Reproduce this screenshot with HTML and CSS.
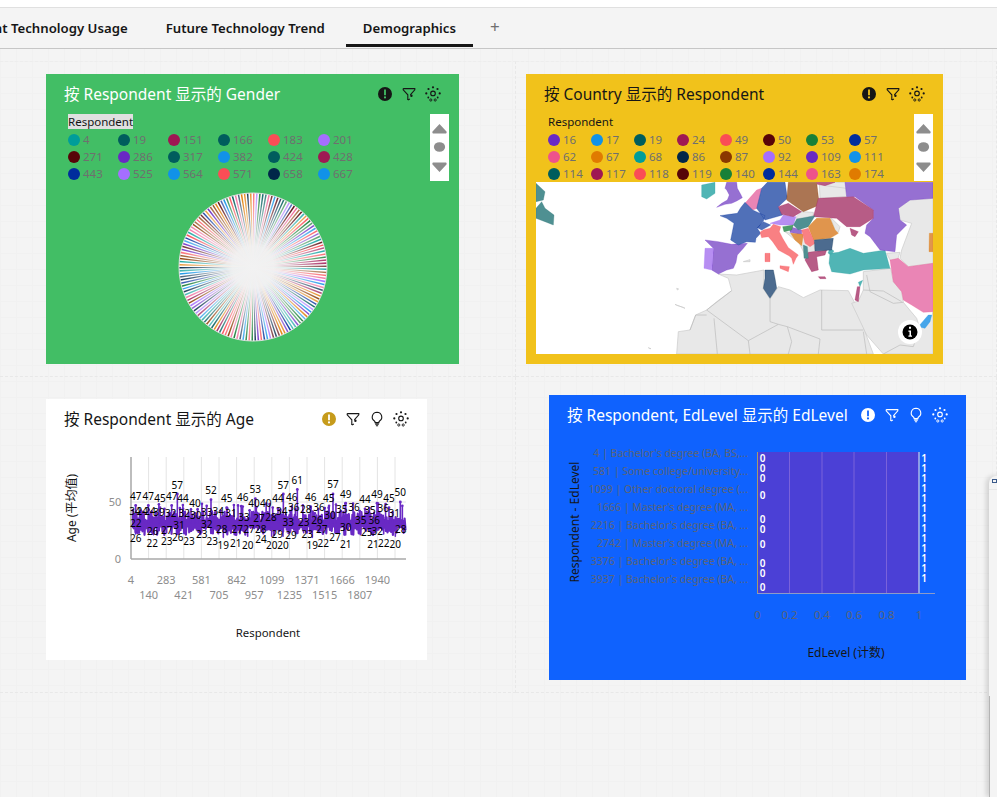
FILE: index.html
```html
<!DOCTYPE html>
<html lang="zh">
<head>
<meta charset="utf-8">
<title>Demographics</title>
<link rel="stylesheet" href="styles.css">
</head>
<body>
<svg class="defs" width="0" height="0" aria-hidden="true">
  <symbol id="i-notice" viewBox="0 0 16 16"><path fill-rule="evenodd" d="M8 1a7 7 0 1 0 0 14A7 7 0 0 0 8 1zM7.1 3.6h1.8v5.600H7.100zM8 10.300a1.100 1.100 0 1 1 0 2.200 1.100 1.100 0 0 1 0-2.200z"/></symbol>
  <symbol id="i-filter" viewBox="0 0 16 16"><path fill="none" stroke="currentColor" stroke-width="1.100" d="M2.200 2.600h11.600v1.300L9.300 8.800M6.800 14V8.800L2.200 3.900V2.600"/><path fill="none" stroke="currentColor" stroke-width="1.100" d="M6.800 14l2.100-1"/><circle cx="10.400" cy="9.700" r="1.200" fill="currentColor"/></symbol>
  <symbol id="i-bulb" viewBox="0 0 16 16"><path fill="none" stroke="currentColor" stroke-width="1.100" d="M8 1.200a4.800 4.800 0 0 0-2.600 8.800c.5.4.7 1 .7 1.600h3.800c0-.6.2-1.200.7-1.600A4.800 4.800 0 0 0 8 1.200zM6.200 13.100h3.600M6.900 14.700h2.200"/></symbol>
  <symbol id="i-smart" viewBox="0 0 16 16"><circle cx="8" cy="7.400" r="2.300" fill="none" stroke="currentColor" stroke-width="1.100"/><g fill="currentColor"><circle cx="8" cy="1.300" r="1.100"/><circle cx="3.500" cy="3" r="1.100"/><circle cx="12.500" cy="3" r="1.100"/><circle cx="1.300" cy="7.400" r="1.100"/><circle cx="14.700" cy="7.400" r="1.100"/><circle cx="3.300" cy="11.500" r=".9"/><circle cx="12.700" cy="11.500" r=".9"/></g><g fill="none" stroke="currentColor" stroke-width=".9"><circle cx="5.800" cy="14" r="1.100"/><circle cx="10.200" cy="14" r="1.100"/></g></symbol>
  <symbol id="i-scroll" viewBox="0 0 19 67"><g fill="#8d8d8d"><path d="M9.500 10l6.500 7a1.500 1.500 0 0 1 0 2.500H3a1.500 1.500 0 0 1 0-2.500z"/><ellipse cx="9.500" cy="33" rx="5.600" ry="4.800"/><path d="M9.500 58l6.500-7a1.500 1.500 0 0 0 0-2.500H3A1.500 1.500 0 0 0 3 51z"/></g></symbol>
</svg>

<div class="topline"></div>
<nav class="tabs">
  <a class="tab">Current Technology Usage</a>
  <a class="tab">Future Technology Trend</a>
  <a class="tab tab-active">Demographics</a>
  <span class="tab-add">+</span>
</nav>

<main class="canvas">
  <div class="cell">
    <section class="card card-gender">
      <header class="card-head">
        <h2 class="card-title">按 Respondent 显示的 Gender</h2>
        <div class="card-icons">
          <svg class="ico"><use href="#i-notice"/></svg>
          <svg class="ico"><use href="#i-filter"/></svg>
          <svg class="ico"><use href="#i-smart"/></svg>
        </div>
      </header>
      <div class="legend-panel">
        <div class="legend legend-wide">
          <div class="legend-title legend-title-hl">Respondent</div>
          <ul class="legend-grid cols-wide">
            <li><i class="dot c-teal"></i>4</li><li><i class="dot c-dteal"></i>19</li><li><i class="dot c-mag"></i>151</li><li><i class="dot c-dteal"></i>166</li><li><i class="dot c-red"></i>183</li><li><i class="dot c-lpur"></i>201</li>
            <li><i class="dot c-wine"></i>271</li><li><i class="dot c-pur"></i>286</li><li><i class="dot c-dteal"></i>317</li><li><i class="dot c-sky"></i>382</li><li><i class="dot c-dteal"></i>424</li><li><i class="dot c-mag"></i>428</li>
            <li><i class="dot c-navy"></i>443</li><li><i class="dot c-lpur"></i>525</li><li><i class="dot c-sky"></i>564</li><li><i class="dot c-red"></i>571</li><li><i class="dot c-ink"></i>658</li><li><i class="dot c-sky"></i>667</li>
          </ul>
        </div>
        <svg class="scroller"><use href="#i-scroll"/></svg>
      </div>
      <svg id="pie" class="pie" width="150" height="150" viewBox="-75 -75 150 150"></svg>
    </section>
  </div>

  <div class="cell">
    <section class="card card-country">
      <header class="card-head">
        <h2 class="card-title">按 Country 显示的 Respondent</h2>
        <div class="card-icons">
          <svg class="ico"><use href="#i-notice"/></svg>
          <svg class="ico"><use href="#i-filter"/></svg>
          <svg class="ico"><use href="#i-smart"/></svg>
        </div>
      </header>
      <div class="legend-panel">
        <div class="legend legend-narrow">
          <div class="legend-title">Respondent</div>
          <ul class="legend-grid cols-narrow">
            <li><i class="dot c-pur"></i>16</li><li><i class="dot c-sky"></i>17</li><li><i class="dot c-dteal"></i>19</li><li><i class="dot c-mag"></i>24</li><li><i class="dot c-red"></i>49</li><li><i class="dot c-wine"></i>50</li><li><i class="dot c-green"></i>53</li><li><i class="dot c-navy"></i>57</li>
            <li><i class="dot c-pink"></i>62</li><li><i class="dot c-orange"></i>67</li><li><i class="dot c-teal"></i>68</li><li><i class="dot c-ink"></i>86</li><li><i class="dot c-brown"></i>87</li><li><i class="dot c-lpur"></i>92</li><li><i class="dot c-pur"></i>109</li><li><i class="dot c-sky"></i>111</li>
            <li><i class="dot c-dteal"></i>114</li><li><i class="dot c-mag"></i>117</li><li><i class="dot c-red"></i>118</li><li><i class="dot c-wine"></i>119</li><li><i class="dot c-green"></i>140</li><li><i class="dot c-navy"></i>144</li><li><i class="dot c-pink"></i>163</li><li><i class="dot c-orange"></i>174</li>
          </ul>
        </div>
        <svg class="scroller"><use href="#i-scroll"/></svg>
      </div>
      <div class="map-wrap">
        <svg class="map" viewBox="18 21 1191 516" preserveAspectRatio="none">
          <g class="land">
            <path d="M440 537L445 470L480 465L497 420L530 405L560 380L605 347L595 310L565 297L620 300L702 285L700 340L720 372L745 335L780 345L820 368L870 345L955 347L975 385L1005 470L1030 537Z"/>
            <path d="M985 378L1000 345L1000 290L1082 280L1090 320L1115 350L1120 382L1160 430L1168 455L1205 425L1209 410V537H1060L1010 480L965 385Z"/>
            <path d="M1105 100L1140 75L1209 70V265L1135 275L1110 250L1115 225L1145 145L1110 135Z"/>
            <path d="M1070 235L1110 232L1100 262L1080 255Z"/>
            <path d="M868 25H945L950 65L870 70Z"/>
            <path d="M945 22L865 22L885 32L950 40Z"/>
            <path d="M800 125L815 110L850 112L850 122L820 132L800 132Z"/>
            <path d="M900 125L930 155L925 172L915 165Z"/>
            <path d="M765 170L850 195L855 230L830 250L808 205Z"/>
            <path d="M640 260l20-6v6zM440 340l6 2-4 3zM435 388l30 12-5-3-20-6zM355 518l8 3h-4z"/>
          </g>
          <g class="borders">
            <path d="M530 405L655 497L745 448L772 455L870 492M605 347L530 405M552 430L562 537M655 497L660 537M772 455L785 500L775 537M870 492L865 537M745 448L720 440L720 372M875 345L875 465M875 465H1000M1000 470L1010 537M1010 300L1020 350L1090 385L1120 382M1000 345L1060 348L1115 380M480 465L497 420H530"/>
            <path d="M1060 537L1110 510L1150 515L1168 460"/>
          </g>
          <g class="countries">
            <path class="m-sea" d="M18 25L45 50L40 75L18 80ZM18 100L35 80L45 100L72 120L70 150L45 140L18 130Z"/>
            <path class="m-tq" d="M515 30L555 22L555 55L530 72L515 65ZM900 235L925 232L960 220L1000 235L1065 225L1080 280L1000 285L960 297L905 290L897 265ZM900 220l12 8-10 12-8-6ZM985 322L998 316L990 335Z"/>
            <path class="m-pr" d="M590 22H620L622 40L632 58L637 68L620 78L605 85L585 88L560 97L575 85L592 75L598 60L590 45L585 40ZM525 195L565 200L605 208L652 205L640 220L622 240L618 262L610 280L590 285L565 297L545 285L550 220ZM945 22H1209V70L1140 75L1105 100L1110 135L1130 150L1100 180L1095 230L1050 225L1020 185L1005 175L1010 150L1030 130L1030 105L975 65L950 65ZM780 155L815 165L815 180L780 172Z"/>
            <path class="m-pk" d="M645 85L680 45L695 40L682 100L668 105ZM1080 255L1105 250L1135 275L1209 265V410L1180 412L1145 390L1120 375L1115 350L1090 320Z"/>
            <path class="m-bl" d="M712 22H765L772 70L745 95L758 120L705 135L680 100L695 40ZM570 122L598 118L622 115L632 98L645 82L668 105L705 122L700 138L682 160L692 175L678 190L676 202L650 200L625 210L602 195L607 170L612 145L590 130ZM682 158L700 140L722 150L695 165Z"/>
            <path class="m-lp" d="M720 145L750 135L760 120L798 125L790 150L750 150ZM525 220H550L545 285L522 280Z"/>
            <path class="m-br" d="M775 22H860L868 90L820 110L770 75Z"/>
            <path class="m-mv" d="M745 95L775 85L815 110L790 125L755 118ZM865 70L970 65L1030 105L1030 130L990 155L950 155L920 130L850 125ZM960 160L985 170L975 185L965 180ZM835 232L890 225L885 240L860 245L865 285L845 290L825 255ZM982 335L990 335L985 380L975 375ZM865 305H885L888 311H870ZM860 22H915L885 32L862 28Z"/>
            <path class="m-sea" d="M790 150L800 132L855 122L835 155L805 165ZM820 210L832 215L835 250L822 250Z"/>
            <path class="m-gr" d="M758 155L790 150L785 165L762 170Z"/>
            <path class="m-or" d="M835 155L860 130L900 130L915 165L925 175L900 190L850 195ZM782 175L820 178L815 212L795 195ZM1198 175H1209V230H1197Z"/>
            <path class="m-sl" d="M690 172L700 165L720 160L730 148L752 155L748 170L758 190L775 218L805 240L798 250L790 268L785 250L778 243L745 225L728 200L715 185L695 188ZM750 272L778 275L775 290L750 280ZM705 235H720V260H705ZM815 165L835 160L855 205L840 215L825 205Z"/>
            <path class="m-st" d="M853 195L910 190L905 225L855 228ZM705 285H730L735 310L740 340L720 370L700 340L705 310Z"/>
            <path class="m-bu" d="M1165 455L1195 420L1205 420L1200 440L1185 460Z"/>
          </g>
        </svg>
        <svg class="map-info" viewBox="0 0 24 24"><circle cx="12" cy="12" r="12" fill="#fff"/><circle cx="12" cy="12" r="7.500" fill="#000"/><path fill="#fff" d="M11 6.800h2v2h-2zM10.400 10.400h2.600v5h1v1.400h-3.600v-1.400h1.100V11.800h-1.100z"/></svg>
      </div>
    </section>
  </div>

  <div class="cell">
    <section class="card card-age">
      <header class="card-head">
        <h2 class="card-title">按 Respondent 显示的 Age</h2>
        <div class="card-icons">
          <svg class="ico ico-amber"><use href="#i-notice"/></svg>
          <svg class="ico"><use href="#i-filter"/></svg>
          <svg class="ico"><use href="#i-bulb"/></svg>
          <svg class="ico"><use href="#i-smart"/></svg>
        </div>
      </header>
      <svg id="age" class="chart" width="381" height="221" viewBox="46 439 381 221"></svg>
    </section>
  </div>

  <div class="cell">
    <section class="card card-edu">
      <header class="card-head">
        <h2 class="card-title">按 Respondent, EdLevel 显示的 EdLevel</h2>
        <div class="card-icons">
          <svg class="ico"><use href="#i-notice"/></svg>
          <svg class="ico"><use href="#i-filter"/></svg>
          <svg class="ico"><use href="#i-bulb"/></svg>
          <svg class="ico"><use href="#i-smart"/></svg>
        </div>
      </header>
      <svg id="edu" class="chart" width="417" height="245" viewBox="549 435 417 245">
        <rect class="edu-bar" x="757" y="452" width="162" height="141"/>
        <path class="edu-grid" d="M789.500 452V593M822 452V593M854 452V593M886.500 452V593"/>
        <path class="edu-end" d="M919 452V593"/>
        <path class="edu-left" d="M757.500 452V593"/>
        <path class="edu-base" d="M757 593.500H935"/>
        <g class="edu-cats">
          <text x="748" y="453">4 | Bachelor's degree (BA, BS,...</text>
          <text x="748" y="471">581 | Some college/university...</text>
          <text x="748" y="489">1099 | Other doctoral degree (...</text>
          <text x="748" y="507">1666 | Master's degree (MA, ...</text>
          <text x="748" y="525">2216 | Bachelor's degree (BA, ...</text>
          <text x="748" y="543">2742 | Master's degree (MA, ...</text>
          <text x="748" y="561">3376 | Bachelor's degree (BA, ...</text>
          <text x="748" y="579">3937 | Bachelor's degree (BA, ...</text>
        </g>
        <g class="edu-vals">
          <text x="762.500" y="458">0</text><text x="762.500" y="468">0</text><text x="762.500" y="478">0</text><text x="762.500" y="495">0</text><text x="762.500" y="519">0</text><text x="762.500" y="529">0</text><text x="762.500" y="543.500">0</text><text x="762.500" y="563">0</text><text x="762.500" y="573">0</text><text x="762.500" y="587">0</text>
          <text x="924" y="458">1</text><text x="924" y="468">1</text><text x="924" y="478">1</text><text x="924" y="488">1</text><text x="924" y="498">1</text><text x="924" y="508">1</text><text x="924" y="518">1</text><text x="924" y="528">1</text><text x="924" y="538">1</text><text x="924" y="548">1</text><text x="924" y="558">1</text><text x="924" y="568">1</text><text x="924" y="578">1</text>
        </g>
        <g class="edu-ticks">
          <text x="757.500" y="614">0</text><text x="789.500" y="614">0.2</text><text x="822" y="614">0.4</text><text x="854" y="614">0.6</text><text x="886.500" y="614">0.8</text><text x="919" y="614">1</text>
        </g>
        <text class="axis-title" x="846" y="652">EdLevel (计数)</text>
        <text class="axis-title" transform="translate(574 522) rotate(-90)">Respondent - EdLevel</text>
      </svg>
    </section>
  </div>
</main>

<aside class="side-panel">
  <div class="side-head"><span class="side-logo"></span></div>
</aside>
<script src="app.js"></script>
</body>
</html>
```
FILE: styles.css
```css
* { box-sizing: border-box; }
html, body { margin: 0; height: 100%; }
body {
  width: 997px;
  height: 797px;
  overflow: hidden;
  position: relative;
  background: #f4f4f4;
  color: #161616;
  font-family: "Noto Sans", "Noto Sans CJK SC", sans-serif;
}
.defs { position: absolute; }
.topline { height: 8px; background: #fff; border-bottom: 1px solid #e0e0e0; }

.tabs {
  height: 41px;
  display: flex;
  gap: 4px;
  margin-left: -59px;
  background: #f4f4f4;
  border-bottom: 1px solid #c6c6c6;
  white-space: nowrap;
}
.tab {
  flex: none;
  height: 39px;
  padding: 0 17px;
  font-size: 13.200px;
  font-weight: 600;
  line-height: 41px;
  border-bottom: 3px solid transparent;
}
.tab-active { border-bottom-color: #161616; }
.tab-add { margin-left: 13px; font-size: 17px; line-height: 37px; color: #6f6f6f; }

.canvas {
  height: 748px;
  padding-top: 12px;
  display: grid;
  grid-template-columns: 516px 481px;
  grid-template-rows: 316px 316px;
  align-content: start;
  background-color: #f4f4f4;
  background-image:
    linear-gradient(#f1f1f1 1px, transparent 1px),
    linear-gradient(90deg, #f1f1f1 1px, transparent 1px);
  background-size: 16px 16px;
  background-position: 0 12px;
}
.cell { border-right: 1px dashed #e8e8e8; border-bottom: 1px dashed #e8e8e8; }
.cell:nth-child(-n+2) { border-top: 1px dashed #ededed; }

.card { display: flex; flex-direction: column; overflow: hidden; }
.card-gender { width: 413px; height: 290px; margin: 12px 0 0 46px; background: #42be65; }
.card-country { width: 417px; height: 290px; margin: 12px 0 0 10px; background: #f1c21b; }
.card-age { width: 381px; height: 261px; margin: 22px 0 0 46px; background: #fff; }
.card-edu { width: 417px; height: 285px; margin: 18px 0 0 33px; background: #0f62fe; }

.card-head {
  flex: none;
  height: 40px;
  padding: 0 18px;
  display: flex;
  align-items: center;
  justify-content: space-between;
}
.card-title { margin: 0; font-size: 15.500px; font-weight: 400; line-height: 40px; white-space: nowrap; }
.card-gender .card-title, .card-edu .card-title { color: #fff; }
.card-icons { display: flex; gap: 8px; }
.ico { width: 16px; height: 16px; fill: #161616; color: #161616; display: block; }
.ico-amber { fill: #c69b1b; }
.card-edu .ico { fill: #fff; color: #fff; }

.legend-panel { flex: none; height: 68px; margin: 0 10px; display: flex; justify-content: space-between; }
.legend { padding-left: 12px; }
.legend-title { height: 15px; width: max-content; font-size: 11.500px; line-height: 15px; color: #161616; }
.legend-title-hl { background: #e0e0e0; }
.legend-grid {
  list-style: none;
  margin: 2px 0 0;
  padding: 0;
  display: grid;
  grid-auto-rows: 17px;
}
.cols-wide { grid-template-columns: repeat(6, 50px); }
.cols-narrow { grid-template-columns: repeat(8, 43px); }
.legend-grid li {
  display: flex;
  align-items: center;
  gap: 3px;
  font-size: 11.500px;
  color: #6f6f6f;
}
.dot { flex: none; width: 12px; height: 12px; border-radius: 50%; }
.c-teal { background: #009d9a; } .c-dteal { background: #005d5d; } .c-mag { background: #9f1853; }
.c-red { background: #fa4d56; } .c-lpur { background: #a56eff; } .c-wine { background: #570408; }
.c-pur { background: #6929c4; } .c-sky { background: #1192e8; } .c-navy { background: #002d9c; }
.c-ink { background: #012749; } .c-green { background: #198038; } .c-pink { background: #ee538b; }
.c-orange { background: #e07b00; } .c-brown { background: #8a3800; }
.scroller { flex: none; width: 19px; height: 67px; background: #fff; }

.pie { display: block; margin: 10px auto 0; }

.map-wrap { position: relative; flex: none; height: 172px; margin: 0 10px; background: #fff; }
.map { display: block; width: 100%; height: 100%; }
.map-info { position: absolute; left: 362px; top: 138px; width: 24px; height: 24px; }
.land path { fill: #e8e8e8; stroke: #c9c9c9; stroke-width: 2; }
.borders path { fill: none; stroke: #b9b9b9; stroke-width: 2; }
.countries path { stroke-width: 1.500; stroke-opacity: .55; }
.m-sea { fill: #4f9092; stroke: #2f7474; } .m-tq { fill: #50b5b5; stroke: #2fa0a0; }
.m-pr { fill: #9670d2; stroke: #6929c4; } .m-pk { fill: #ea85b5; stroke: #ee538b; }
.m-bl { fill: #5070b8; stroke: #002d9c; } .m-lp { fill: #b78ef2; stroke: #a56eff; }
.m-br { fill: #ab7553; stroke: #8a3800; } .m-mv { fill: #b75c86; stroke: #9f1853; }
.m-gr { fill: #4f9c6c; stroke: #198038; } .m-or { fill: #e0954d; stroke: #e07b00; }
.m-sl { fill: #f98083; stroke: #fa4d56; } .m-st { fill: #4c6b8f; stroke: #012749; }
.m-bu { fill: #45a5ea; stroke: #1192e8; }

.chart { display: block; font-family: "Noto Sans", "Noto Sans CJK SC", sans-serif; }
.chart text { text-anchor: middle; dominant-baseline: central; }
.age-grid { stroke: #e4e4e4; stroke-width: 1; }
.age-axis { stroke: #a8a8a8; stroke-width: 1.500; fill: none; }
.age-axis-left { stroke: #bdbdbd; stroke-width: 2; }
.age-line { fill: none; stroke: #6929c4; stroke-width: 2.200; stroke-linejoin: round; }
.age-spike { stroke: #6929c4; stroke-width: 1.600; stroke-linecap: round; }
.age-point { fill: #6929c4; }
.age-label { font-size: 10px; fill: #000; }
.age-tick { font-size: 11px; fill: #8d8d8d; }
.axis-title { font-size: 12px; fill: #161616; }
.chart .axis-title-sm { font-size: 11.400px; }

.edu-bar { fill: #4b40d6; }
.edu-grid { stroke: #7a62da; stroke-width: 1; fill: none; }
.edu-end { stroke: #a9b8e8; stroke-width: 1.500; }
.edu-left { stroke: #a39a70; stroke-width: 1; }
.edu-base { stroke: #8d9bc8; stroke-width: 1; }
.chart .edu-cats text { text-anchor: end; font-size: 10.500px; fill: #5a6478; }
.edu-vals text { font-size: 10px; font-weight: 600; fill: #fff; }
.edu-ticks text { font-size: 11.500px; fill: #5a6478; }

.side-panel {
  position: absolute;
  left: 989px;
  top: 476px;
  width: 20px;
  height: 321px;
  background: #f4f4f4;
  border-top-left-radius: 7px;
  box-shadow: -3px 0 5px rgba(0, 0, 0, .14);
}
.side-panel::after {
  content: "";
  position: absolute;
  left: 0;
  top: 220px;
  bottom: 0;
  width: 1px;
  background: #b4b4b4;
}
.side-head { height: 14px; border-bottom: 1px solid #e8e8e8; padding: 3px 0 0 3px; }
.side-logo { display: block; width: 5px; height: 4px; border: 1px solid #3a5a8a; }
```
FILE: app.js
```js
const SVG_NS = "http://www.w3.org/2000/svg";

function el(parent, name, attrs, text) {
  const node = document.createElementNS(SVG_NS, name);
  for (const key in attrs) node.setAttribute(key, attrs[key]);
  if (text !== undefined) node.textContent = text;
  parent.appendChild(node);
  return node;
}

function seeded(seed) {
  let s = seed;
  return () => {
    s = (s * 1664525 + 1013904223) % 4294967296;
    return s / 4294967296;
  };
}

/* Gender: one very thin slice for every respondent */
function drawPie() {
  const svg = document.getElementById("pie");
  const palette = ["#009d9a", "#005d5d", "#9f1853", "#fa4d56", "#a56eff", "#570408", "#6929c4", "#1192e8", "#002d9c", "#012749", "#198038", "#ee538b", "#e07b00", "#8a3800"];
  const rand = seeded(11);
  const R = 74;
  const N = 150;
  const defs = el(svg, "defs", {});
  const grad = el(defs, "radialGradient", { id: "pieCore" });
  el(grad, "stop", { offset: "0", "stop-color": "#f2f2f2", "stop-opacity": "1" });
  el(grad, "stop", { offset: ".28", "stop-color": "#f2f2f2", "stop-opacity": ".96" });
  el(grad, "stop", { offset: ".62", "stop-color": "#f4f4f4", "stop-opacity": ".5" });
  el(grad, "stop", { offset: "1", "stop-color": "#fff", "stop-opacity": "0" });
  el(svg, "circle", { r: R, fill: "#fff" });
  for (let i = 0; i < N; i++) {
    const a = (i / N) * 2 * Math.PI;
    const b = ((i + 0.5) / N) * 2 * Math.PI;
    const color = palette[Math.floor(rand() * palette.length)];
    el(svg, "path", {
      d: `M0 0L${R * Math.sin(a)} ${-R * Math.cos(a)}L${R * Math.sin(b)} ${-R * Math.cos(b)}Z`,
      fill: color,
      "fill-opacity": rand() * 0.3 + 0.7,
    });
  }
  el(svg, "circle", { r: R, fill: "url(#pieCore)" });
  el(svg, "circle", { r: R, fill: "none", stroke: "#e0e0e0", "stroke-width": 1 });
}

/* Age: labels as [value, x, y], positions in thirds of a pixel */
const AGE_LABELS = [
  [47,272,-13],[47,310,-13],[45,345,-7],[47,380,-13],[57,397,-45],[44,414,-5],[52,498,-31],[45,545,-7],[46,593,-9],[53,631,-34],[44,699,-5],[57,715,-46],[46,740,-9],[61,757,-61],[46,797,-9],[45,851,-7],[57,864,-47],[49,902,-19],[44,960,-3],[49,996,-19],[45,1032,-7],[50,1066,-25],
  [34,270,33],[24,292,33],[24,315,33],[39,342,35],[32,377,38],[32,418,38],[40,450,10],[30,452,45],[33,485,35],[34,520,33],[31,558,40],[33,597,52],[40,627,10],[40,662,10],[27,642,55],[28,678,52],[34,710,32],[36,746,22],[28,782,28],[36,822,22],[35,890,28],[36,927,22],[35,975,30],[36,1015,25],[31,1048,40],
  [22,272,70],[26,323,93],[27,365,90],[31,402,76],[32,485,73],[28,530,86],[27,577,88],[27,612,88],[28,647,86],[33,730,67],[23,776,67],[26,816,60],[30,855,44],[27,830,88],[30,902,80],[35,947,60],[36,988,60],
  [26,272,113],[22,322,128],[23,365,122],[26,398,112],[23,432,122],[23,470,102],[23,502,122],[19,535,136],[21,572,130],[20,608,134],[24,648,118],[29,697,102],[29,738,104],[20,680,134],[20,714,134],[23,787,103],[19,802,136],[22,835,128],[27,870,110],[21,902,132],[25,965,97],[32,997,92],[21,984,132],[22,1016,128],[20,1051,133],[28,1067,86],
];

function drawAge() {
  const svg = document.getElementById("age");
  const rand = seeded(29);
  const left = 131, right = 406, top = 457, base = 559;
  const y = (v) => base - v * 1.14;

  for (let i = 1; i <= 15; i++) {
    const x = left + i * 17.6;
    el(svg, "line", { class: "age-grid", x1: x, x2: x, y1: top, y2: base });
  }
  el(svg, "line", { class: "age-grid", x1: left, x2: right, y1: y(50), y2: y(50) });

  const pts = [];
  let odd = false;
  for (let x = left; x <= right; x += 0.9) {
    const v = odd ? 21 + rand() * 8 : 33 + rand() * 9;
    pts.push(`${x.toFixed(1)},${y(v).toFixed(1)}`);
    odd = !odd;
  }
  el(svg, "polyline", { class: "age-line", points: pts.join(" ") });

  for (let x = left + 2; x < right; x += 3 + rand() * 7) {
    const v = 40 + rand() * 9;
    el(svg, "line", { class: "age-spike", x1: x, x2: x, y1: y(v), y2: y(32) });
    el(svg, "circle", { class: "age-point", cx: x, cy: y(v), r: 1.3 });
  }

  for (const [value, zx] of AGE_LABELS) {
    const x = zx / 3 + 45;
    if (value >= 36) {
      el(svg, "line", { class: "age-spike", x1: x, x2: x, y1: y(value), y2: y(32) });
      el(svg, "circle", { class: "age-point", cx: x, cy: y(value), r: 1.4 });
    } else if (value <= 24) {
      el(svg, "line", { class: "age-spike", x1: x, x2: x, y1: y(value), y2: y(28) });
    }
  }

  el(svg, "line", { class: "age-axis age-axis-left", x1: left, x2: left, y1: top, y2: base });
  el(svg, "line", { class: "age-axis", x1: left, x2: right, y1: base, y2: base });

  for (const [value, zx, zy] of AGE_LABELS) {
    el(svg, "text", { class: "age-label", x: zx / 3 + 45, y: zy / 3 + 500 }, value);
  }

  el(svg, "text", { class: "age-tick", x: 115, y: 501 }, "50");
  el(svg, "text", { class: "age-tick", x: 118, y: 558 }, "0");
  ["4", "283", "581", "842", "1099", "1371", "1666", "1940"].forEach((t, i) =>
    el(svg, "text", { class: "age-tick", x: left + i * 35.2, y: 579 }, t));
  ["140", "421", "705", "957", "1235", "1515", "1807"].forEach((t, i) =>
    el(svg, "text", { class: "age-tick", x: left + 17.6 + i * 35.2, y: 594 }, t));
  el(svg, "text", { class: "axis-title axis-title-sm", x: 268, y: 632.5 }, "Respondent");
  el(svg, "text", { class: "axis-title", transform: "translate(71 508) rotate(-90)" }, "Age (平均值)");
}

drawPie();
drawAge();
```
